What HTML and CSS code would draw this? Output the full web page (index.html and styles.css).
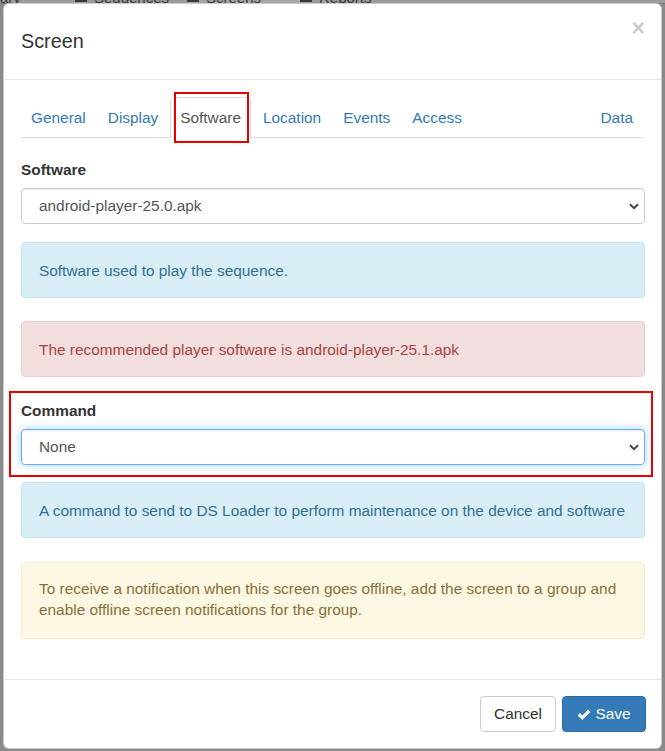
FILE: index.html
```html
<!DOCTYPE html>
<html>
<head>
<meta charset="utf-8">
<link rel="stylesheet" href="styles.css">
</head>
<body>
<div class="page">
  <div class="topnav">
    <span class="n1">ary</span>
    <span class="n2"><i class="ico"></i>Sequences</span>
    <span class="n3 act"><i class="ico"></i>Screens</span>
    <span class="n4"><i class="ico"></i>Reports</span>
  </div>
</div>
<div class="modal">
  <div class="modal-header">
    <span class="close">×</span>
    <h4 class="modal-title">Screen</h4>
  </div>
  <div class="modal-body">
    <ul class="tabs">
      <li><a>General</a></li>
      <li><a>Display</a></li>
      <li class="active"><a>Software</a><span class="mark mark-tab"></span></li>
      <li><a>Location</a></li>
      <li><a>Events</a></li>
      <li><a>Access</a></li>
      <li class="right"><a>Data</a></li>
    </ul>
    <div class="tab-content">
      <div class="group">
        <label class="lbl">Software</label>
        <div class="select">
          <span class="sel-text">android-player-25.0.apk</span>
          <svg class="chev" width="10" height="7" viewBox="0 0 10 7"><path d="M1 1.2 L5 5.2 L9 1.2" fill="none" stroke="#444" stroke-width="2"/></svg>
        </div>
        <div class="alert info first">Software used to play the sequence.</div>
      </div>
      <div class="alert danger">The recommended player software is android-player-25.1.apk</div>
      <div class="group cmd">
        <span class="mark mark-cmd"></span>
        <label class="lbl">Command</label>
        <div class="select focus">
          <span class="sel-text">None</span>
          <svg class="chev" width="10" height="7" viewBox="0 0 10 7"><path d="M1 1.2 L5 5.2 L9 1.2" fill="none" stroke="#444" stroke-width="2"/></svg>
        </div>
      </div>
      <div class="alert info second">A command to send to DS Loader to perform maintenance on the device and software</div>
      <div class="alert warning">To receive a notification when this screen goes offline, add the screen to a group and enable offline screen notifications for the group.</div>
    </div>
  </div>
  <div class="modal-footer">
    <button class="btn btn-default">Cancel</button>
    <button class="btn btn-primary"><svg class="ok" width="14" height="12" viewBox="0 0 14 12"><path d="M0.6 6.4 L2.9 4.1 L5.3 6.5 L11.2 0.6 L13.5 2.9 L5.3 11.1 Z" fill="#fff"/></svg>Save</button>
  </div>
</div>
</body>
</html>
```

FILE: styles.css
```css
* { box-sizing: border-box; }
html, body {
  margin: 0;
  padding: 0;
  width: 665px;
  height: 751px;
  overflow: hidden;
  background: #8a8a8a;
  font-family: "Liberation Sans", Arial, Helvetica, sans-serif;
  font-size: 15.4px;
  line-height: 22px;
  color: #333;
}
.page {
  height: 751px;
}
.topnav {
  height: 12px;
  margin-top: -8px;
  display: flex;
  font-size: 15px;
  line-height: 12px;
  color: #3a3a3a;
  background: #9b9b9b;
  border-bottom: 1px solid #7a7a7a;
}
.topnav span { display: flex; align-items: flex-start; }
.topnav .ico {
  display: inline-block;
  width: 12px;
  height: 10px;
  border: 2px solid #3a3a3a;
  margin-right: 7px;
}
.n1 { width: 75px; }
.n2 { width: 112px; }
.n3 { width: 113px; }
.n4 { width: 100px; }
.topnav .act { background: #a6a6a6; }

.modal {
  position: absolute;
  left: 3px;
  top: 3px;
  width: 659px;
  height: 746px;
  background: #fff;
  border: 1px solid rgba(0,0,0,.2);
  border-radius: 6px;
  display: flex;
  flex-direction: column;
}
.modal-header {
  padding: 23px 17px 24px 17px;
  border-bottom: 1px solid #e5e5e5;
}
.modal-title {
  margin: 0;
  font-size: 19.8px;
  font-weight: normal;
  line-height: 28px;
  color: #333;
}
.close {
  float: right;
  font-size: 23px;
  font-weight: bold;
  line-height: 22px;
  color: #000;
  opacity: .2;
  margin-top: -10px;
  margin-right: -1px;
}
.modal-body {
  flex: 1;
  padding: 17px 16px 0 17px;
}
.tabs {
  list-style: none;
  margin: 0;
  padding: 0;
  display: flex;
  border-bottom: 1px solid #ddd;
}
.tabs li {
  position: relative;
  margin-right: 2px;
  margin-bottom: -1px;
}
.tabs li.right { margin-left: auto; margin-right: 2px; }
.tabs a {
  display: block;
  padding: 9px 9px 8px 9px;
  line-height: 22px;
  color: #337ab7;
  border: 1px solid transparent;
  border-radius: 4px 4px 0 0;
}
.tabs li.active a {
  color: #555;
  border-color: #ddd #ddd transparent #ddd;
  background: #fff;
}
.mark {
  position: absolute;
  border: 2px solid #e60000;
  pointer-events: none;
}
.mark-tab {
  left: 4px;
  right: 2px;
  top: -5px;
  bottom: -5px;
}
.tab-content {
  padding-top: 21px;
}
.group { position: relative; }
.lbl {
  display: block;
  font-weight: bold;
  line-height: 22px;
  margin-bottom: 7px;
  color: #333;
}
.select {
  position: relative;
  height: 36px;
  border: 1px solid #ccc;
  border-radius: 4px;
  padding: 6px 17px;
  color: #555;
  line-height: 22px;
  box-shadow: inset 0 1px 1px rgba(0,0,0,.075);
}
.select.focus {
  border-color: #66afe9;
  box-shadow: inset 0 1px 1px rgba(0,0,0,.075), 0 0 8px rgba(102,175,233,.6);
}
.chev {
  position: absolute;
  right: 5px;
  top: 14px;
}
.alert {
  border: 1px solid transparent;
  border-radius: 4px;
  padding: 17px 17px 15px 17px;
  line-height: 22px;
  margin-bottom: 23px;
}
.alert.first { margin-top: 18px; }
.alert.second { margin-top: 17px; margin-bottom: 24px; }
.info { background: #d9edf7; border-color: #bce8f1; color: #31708f; }
.danger { background: #f2dede; border-color: #ebccd1; color: #a94442; margin-bottom: 23px; }
.warning { background: #fcf8e3; border-color: #faebcc; color: #8a6d3b; line-height: 21px; padding-top: 15px; padding-bottom: 18px; }
.mark-cmd {
  left: -12px;
  right: -8px;
  top: -9px;
  bottom: -12px;
}
.modal-footer {
  border-top: 1px solid #e5e5e5;
  padding: 16px 15px 16px 15px;
  display: flex;
  justify-content: flex-end;
  gap: 6px;
}
.btn {
  font-family: inherit;
  font-size: 15.4px;
  line-height: 22px;
  height: 36px;
  padding: 6px 13px;
  border-radius: 4px;
  border: 1px solid #ccc;
  display: inline-flex;
  align-items: center;
  gap: 4px;
}
.btn-default { background: #fff; color: #333; width: 76px; justify-content: center; }
.btn-primary { background: #337ab7; border-color: #2e6da4; color: #fff; width: 84px; justify-content: center; }
.ok { margin-top: 1px; }
```
